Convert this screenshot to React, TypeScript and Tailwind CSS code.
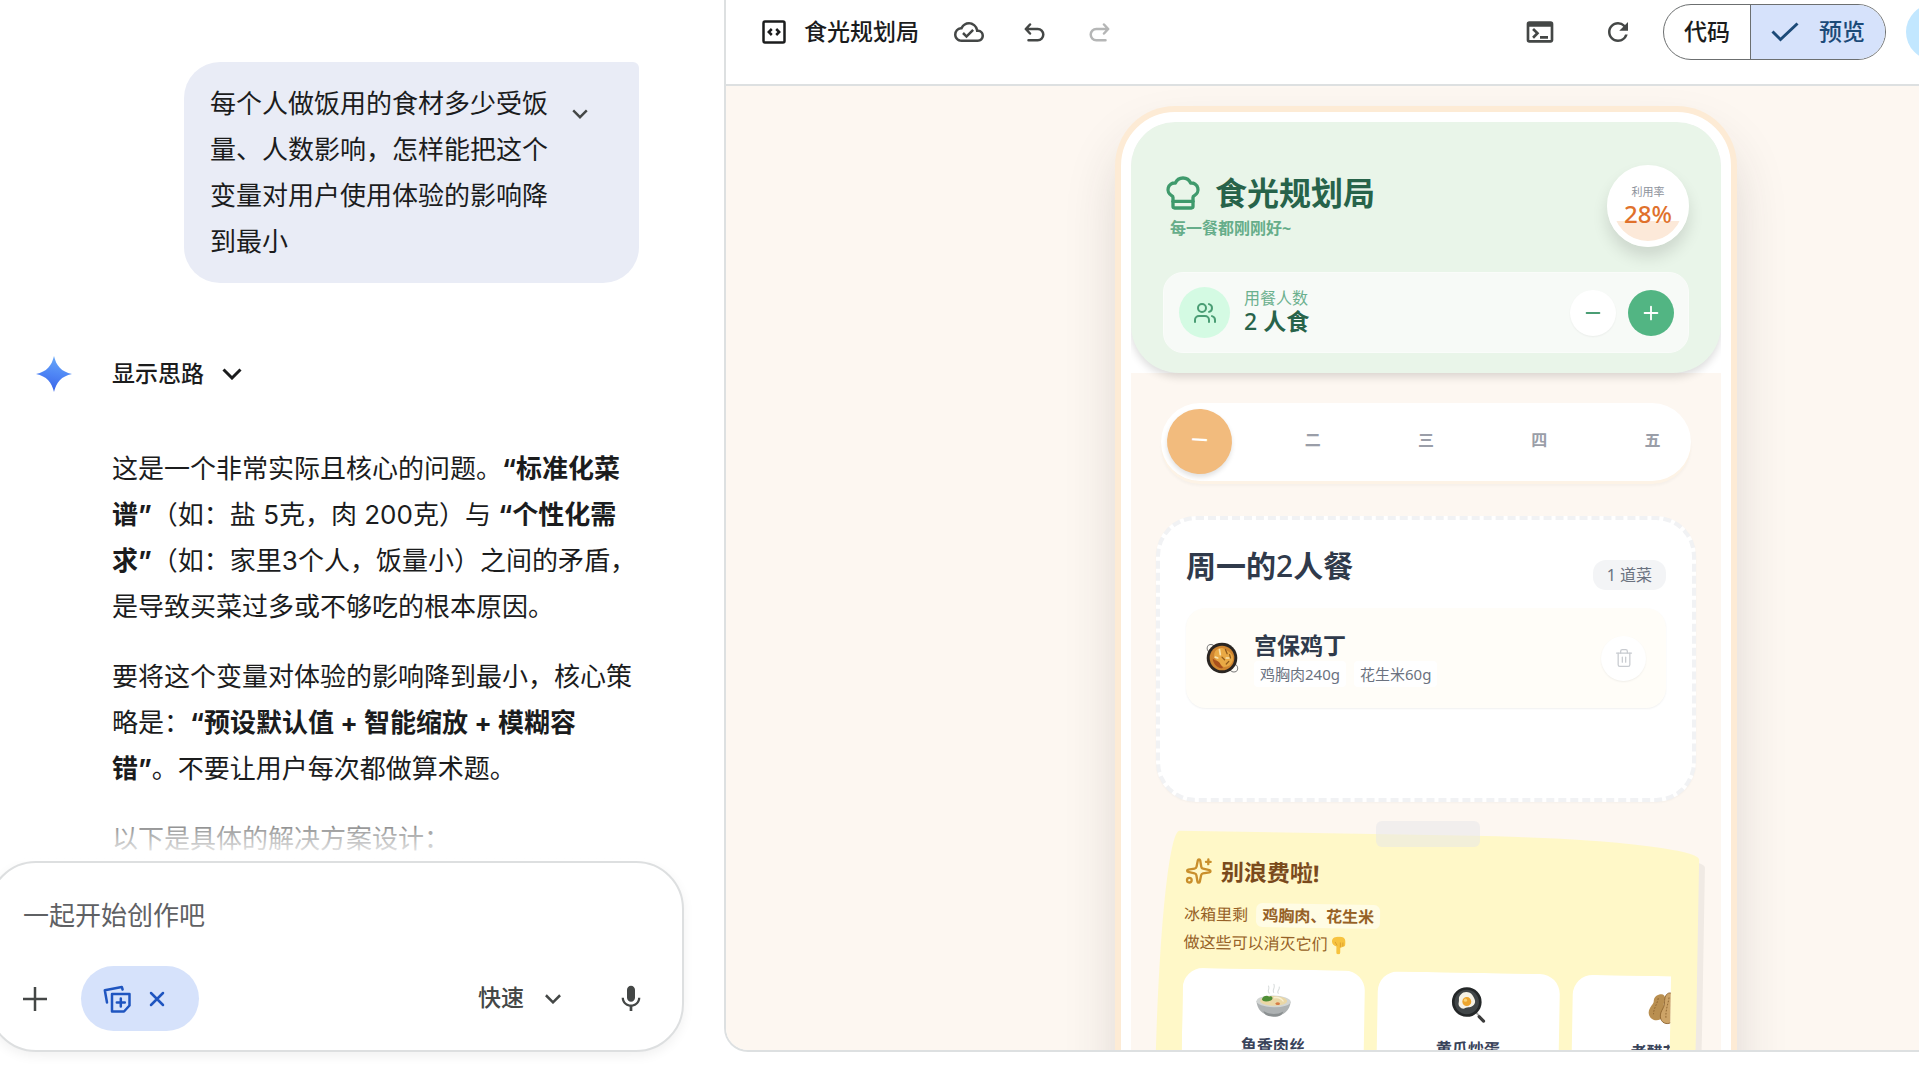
// Canvas workspace: chat column on the left, live app preview on the right.
import { useState } from 'react'
import { ChefHat, Minus, Plus, Sparkles, Trash2, Users } from 'lucide-react'
import { MdMic, MdOutlineCloudDone, MdOutlineTerminal, MdRefresh } from 'react-icons/md'

type DishArt = 'pan' | 'soup' | 'egg' | 'peanut'

const DAYS = ['一', '二', '三', '四', '五']

const INGREDIENTS = ['鸡胸肉240g', '花生米60g']

const SUGGESTIONS: { name: string; art: DishArt }[] = [
  { name: '鱼香肉丝', art: 'soup' },
  { name: '黄瓜炒蛋', art: 'egg' },
  { name: '老醋花生', art: 'peanut' },
]

function Chevron({ className }: { className?: string }) {
  return (
    <svg viewBox="0 0 20 12" fill="none" stroke="currentColor" strokeWidth="3" className={className} aria-hidden="true">
      <path d="M1.5 1.5 10 10l8.500-8.500" />
    </svg>
  )
}

function GeminiStar() {
  return (
    <svg viewBox="0 0 36 36" className="size-9" aria-hidden="true">
      <defs>
        <linearGradient id="star" x1="0.6" y1="0" x2="0.4" y2="1">
          <stop offset="0" stopColor="#6aaaf8" />
          <stop offset="0.5" stopColor="#4f86f5" />
          <stop offset="1" stopColor="#3a63e8" />
        </linearGradient>
      </defs>
      <path fill="url(#star)" d="M18 0c1.300 5.200 2.800 8.600 5.800 11.800C26.800 15 30.500 16.700 36 18c-5.500 1.300-9.200 3-12.200 6.200C20.800 27.400 19.300 30.800 18 36c-1.300-5.200-2.800-8.600-5.800-11.800C9.200 21 5.500 19.300 0 18c5.500-1.300 9.200-3 12.200-6.200C15.200 8.600 16.700 5.200 18 0Z" />
    </svg>
  )
}

function CodeFileIcon() {
  return (
    <svg viewBox="0 0 24 24" fill="none" stroke="currentColor" strokeWidth="2.500" className="size-6" aria-hidden="true">
      <rect x="1.500" y="1.500" width="21" height="21" rx="1.500" />
      <path d="M9.800 9 6.800 12l3 3M14.200 9l3 3-3 3" />
    </svg>
  )
}

function UndoIcon({ className }: { className?: string }) {
  return (
    <svg viewBox="0 0 21 19" fill="none" stroke="currentColor" strokeWidth="2.500" strokeLinecap="round" strokeLinejoin="round" className={className} aria-hidden="true">
      <path d="M6 1.500 1.800 6 6 10.500M2.200 6h11.500a5.600 5.600 0 0 1 0 11.200H4.500" />
    </svg>
  )
}

function CanvasChipIcon() {
  return (
    <svg viewBox="0 0 28 28" fill="none" stroke="currentColor" strokeWidth="2.500" strokeLinecap="round" strokeLinejoin="round" className="size-7" aria-hidden="true">
      <path d="M4 17.500 1.800 5.200 18.800 2l.8 2.500" />
      <path d="M9 9h17.500v11.500l-5.500 6H9z" />
      <path d="M17.800 13.500v8M13.800 17.500h8" />
    </svg>
  )
}

function PointDown() {
  return (
    <svg viewBox="0 0 14 18" className="ml-1 inline-block h-[18px] w-[14px] align-[-4px]" role="img" aria-label="👇">
      <path fill="#f7c33f" d="M2.500 1.200C5 0 10 0 12 1.200c1.800 1.200 2.200 4 1.800 6.800-.3 1.600-1.200 2.400-2.500 2.300-.6.700-1.500 1-2.500.7V16a1.900 1.900 0 0 1-3.900 0v-6C2.500 9.500.6 8 .4 5.500.3 3.500 1 2 2.500 1.200Z" />
      <path fill="none" stroke="#d9992b" strokeWidth=".8" d="M8.800 6v5M11.300 6v4M3.500 5.500l2 3.500" />
    </svg>
  )
}

function DishIcon({ art, className }: { art: DishArt; className?: string }) {
  return (
    <svg viewBox="0 0 40 40" className={className} aria-hidden="true">
      {art === 'pan' && (
        <>
          <circle cx="7" cy="8.500" r="4.500" fill="none" stroke="#7b7b7b" strokeWidth="1.200" />
          <circle cx="34" cy="32" r="4.500" fill="none" stroke="#7b7b7b" strokeWidth="1.200" />
          <circle cx="20" cy="20" r="18" fill="#2a2522" />
          <circle cx="20" cy="20" r="14.500" fill="#cf8530" />
          <path fill="#e9a945" d="M12 12c4-5 9-4 12-2s9 5 9 10-3 9-7 10-5 1-8-3-10-7-6-15Z" />
          <path fill="#a9501c" d="M9 21c3 2 8 3 9 6s5 4 2 5-10-3-11-11Z" />
          <path fill="none" stroke="#8f5a1c" strokeWidth="1.500" strokeLinecap="round" d="m24 10 2 5M28 24l-3 3M20 19l3 3M29 16l1 4" />
          <path fill="none" stroke="#f8e3ae" strokeWidth="2" strokeLinecap="round" d="m17 10 1 6M12 19l3 1M25 20h3" />
        </>
      )}
      {art === 'soup' && (
        <>
          <path fill="none" stroke="#d9dddd" strokeWidth="1.200" strokeLinecap="round" d="M15 11c-3-3 1-4-1-8M20 10c-2-3 2-5 0-9M25 11c-2-3 2-4 1-7" />
          <path fill="#aeb2b3" d="M1 20c1 10 7 16 19 16s18-6 19-16Z" />
          <path fill="#8b9091" d="M9 31c6 4 16 4 22 0-1 4-4 6-11 6S10 35 9 31Z" />
          <ellipse cx="20" cy="20" rx="19" ry="6.500" fill="#d2d5d3" />
          <ellipse cx="20" cy="19.500" rx="15" ry="5.500" fill="#ead7a6" />
          <path fill="#4e8e36" d="M7 18c1-4 6-5 8-3 4-2 5 3 2 4-4 2-9 2-10-1Z" />
          <path fill="#d77c46" d="M22 22c2-2 6-1 5 1s-5 1-5-1Z" />
          <path fill="none" stroke="#f8efd0" strokeWidth="1.500" d="M20 16c5-1 9 1 11 4" />
        </>
      )}
      {art === 'egg' && (
        <>
          <path stroke="#aaa" strokeWidth="2" d="m28 28 4 4" />
          <path stroke="#3d3d3d" strokeWidth="3.500" strokeLinecap="round" d="m32 33 5 5" />
          <circle cx="18" cy="17" r="16.500" fill="#242728" />
          <circle cx="18" cy="17" r="13.500" fill="#414648" />
          <path fill="#f6f2e6" d="M11 9c4-5 11-3 13 0s5 7 2 11-7 2-10 4-8-2-7-6-1-6 2-9Z" />
          <circle cx="18" cy="16.500" r="5" fill="#eda52d" />
          <circle cx="16.500" cy="15" r="1.800" fill="#f9d374" />
        </>
      )}
      {art === 'peanut' && (
        <>
          <path fill="#b98f50" d="M15 5c5-2 8 2 6 7s1 8 0 14-7 9-12 7-7-8-4-13 4-5 4-8 2-6 6-7Z" />
          <path fill="#cda468" stroke="#8d6530" strokeWidth="1" d="M27 3c6 0 8 6 5 10s2 7 2 13-5 12-11 11-8-8-5-14 3-6 3-10 1-10 6-10Z" />
          <path fill="none" stroke="#8d6530" strokeWidth="1" strokeDasharray="2 1.500" d="M14 9c-1 7-5 11-5 18M26 8c-1 8-4 14-3 24M29 8c0 8 1 15 0 23" />
        </>
      )}
    </svg>
  )
}

function ChatColumn() {
  return (
    <section className="flex min-h-0 flex-col font-['Inter','Noto_Sans_CJK_SC',sans-serif] text-[#1b1c1d]">
      <div className="relative min-h-0 flex-1 overflow-hidden pr-[85px] [text-spacing-trim:space-all]">
        <div className="mt-[62px] ml-auto flex w-[455px] items-start gap-[22px] rounded-[36px] rounded-tr-[6px] bg-[#e9ecf6] pt-[19px] pb-[18px] pl-[26px]">
          <p className="w-[340px] text-[26px] leading-[46px]">每个人做饭用的食材多少受饭量、人数影响，怎样能把这个变量对用户使用体验的影响降到最小</p>
          <button type="button" aria-label="展开" className="mt-7 text-[#444746]">
            <Chevron className="h-[10px] w-4" />
          </button>
        </div>

        <div className="mt-[71px] flex h-10 items-center gap-10 pl-9">
          <GeminiStar />
          <button type="button" className="flex items-center gap-[18px] text-[23px] font-medium">
            显示思路
            <Chevron className="h-3 w-5" />
          </button>
        </div>

        <div className="mt-[52px] flex flex-col gap-6 pl-28 text-[26px] leading-[46px]">
          <p>
            这是一个非常实际且核心的问题。<b>“标准化菜谱”</b>（如：盐 5克，肉 200克）与 <b>“个性化需求”</b>（如：家里3个人，饭量小）之间的矛盾，是导致买菜过多或不够吃的根本原因。
          </p>
          <p>
            要将这个变量对体验的影响降到最小，核心策略是：<b>“预设默认值 + 智能缩放 + 模糊容错”</b>。不要让用户每次都做算术题。
          </p>
          <p>以下是具体的解决方案设计：</p>
        </div>
        <div className="pointer-events-none absolute inset-x-0 bottom-0 h-[60px] bg-linear-to-t from-white via-white/60 to-transparent" />
      </div>

      <form className="mr-10 mb-7 -ml-3 flex h-[191px] flex-col rounded-[48px] border-2 border-[#dddfe0] bg-white pr-[35px] pl-[33px] shadow-[0_4px_12px_rgba(0,0,0,0.06)]" onSubmit={(e) => e.preventDefault()}>
        <input
          aria-label="一起开始创作吧"
          placeholder="一起开始创作吧"
          className="mt-[29px] h-[46px] w-full bg-transparent text-[26px] outline-none placeholder:text-[#5f6164] placeholder:opacity-100"
        />
        <div className="mt-7 flex items-center text-[#444746]">
          <button type="button" aria-label="添加">
            <svg viewBox="0 0 24 24" fill="none" stroke="currentColor" strokeWidth="2.500" className="size-6" aria-hidden="true">
              <path d="M12 0v24M0 12h24" />
            </svg>
          </button>
          <button type="button" aria-label="关闭 Canvas" className="ml-[34px] flex h-[65px] items-center gap-[18px] rounded-full bg-[#d6e2fb] px-[22px] text-[#1f55c0]">
            <CanvasChipIcon />
            <svg viewBox="0 0 16 16" fill="none" stroke="currentColor" strokeWidth="2.500" strokeLinecap="round" className="mr-3 size-4" aria-hidden="true">
              <path d="m2 2 12 12M14 2 2 14" />
            </svg>
          </button>
          <button type="button" className="ml-auto flex items-center gap-5 text-[23px] font-medium">
            快速
            <Chevron className="h-[10px] w-[18px]" />
          </button>
          <button type="button" aria-label="麦克风" className="ml-[53px]">
            <MdMic className="size-8" />
          </button>
        </div>
      </form>
    </section>
  )
}

function Toolbar() {
  return (
    <header className="flex h-[86px] items-start justify-between overflow-hidden border-b-2 border-[#dde0e1] bg-white pt-1 font-['Inter','Noto_Sans_CJK_SC',sans-serif] text-[#444746]">
      <div className="flex h-14 items-center pl-9">
        <span className="text-[#1b1c1d]"><CodeFileIcon /></span>
        <h1 className="ml-[18px] text-[23px] font-medium text-[#1b1c1d]">食光规划局</h1>
        <MdOutlineCloudDone className="ml-[35px] size-[30px]" />
        <button type="button" aria-label="撤消" className="ml-10"><UndoIcon className="h-[19px] w-[21px]" /></button>
        <button type="button" aria-label="重做" className="ml-11 text-[#b5b6b6]" disabled><UndoIcon className="h-[19px] w-[21px] -scale-x-100" /></button>
      </div>
      <div className="-mr-[43px] flex h-14 items-center">
        <button type="button" aria-label="控制台"><MdOutlineTerminal className="size-8" /></button>
        <button type="button" aria-label="刷新" className="ml-[47px]"><MdRefresh className="size-[30px]" /></button>
        <div className="ml-[30px] flex h-14 overflow-hidden rounded-full border border-[#6c6f70] text-[23px] font-medium">
          <button type="button" className="border-r border-[#6c6f70] px-5 text-[#1b1c1d]">代码</button>
          <button type="button" aria-pressed="true" className="flex items-center gap-5 bg-[#d6e2fb] px-5 text-[#1c4a78]">
            <svg viewBox="0 0 28 20" fill="none" stroke="currentColor" strokeWidth="3" className="h-5 w-7" aria-hidden="true">
              <path d="m1.500 9.500 8 8L26.500 1.500" />
            </svg>
            预览
          </button>
        </div>
        <button type="button" aria-label="分享" className="ml-5 size-14 rounded-full bg-[#c2e7ff]" />
      </div>
    </header>
  )
}

function PhoneHeader({ people, onChange }: { people: number; onChange: (n: number) => void }) {
  return (
    <div className="relative z-10 rounded-[48px] rounded-t-[44px] bg-[#e9f5e9] px-8 pt-[43px] pb-5 shadow-[0_4px_8px_rgba(0,0,0,0.14)]">
      <div className="flex items-start justify-between">
        <div className="pt-2">
          <h2 className="flex items-center gap-3 text-[32px] leading-10 font-bold text-[#27634a]">
            <ChefHat className="size-10 text-[#3f9a6c]" />
            食光规划局
          </h2>
          <p className="pl-[7px] text-[16px] leading-[30px] font-bold text-[#66ad8a]">每一餐都刚刚好~</p>
        </div>
        <div className="relative flex size-[82px] flex-col items-center justify-center overflow-hidden rounded-full border-[6px] border-white bg-[linear-gradient(to_top,#fce9d9_28%,#ffffff_28%)] shadow-[0_10px_16px_rgba(0,0,0,0.12)]">
          <span className="text-[11px] leading-4 text-[#8d929c]">利用率</span>
          <span className="text-[24px] leading-7 font-medium text-[#e0712c]">28%</span>
        </div>
      </div>

      <div className="mt-[25px] flex items-center rounded-[20px] border border-[#fafcfa] bg-[#f7faf7] py-[14px] pr-[14px] pl-[15px]">
        <span className="flex size-[51px] items-center justify-center rounded-full bg-[#d4fae3] text-[#4a9d74]">
          <Users className="size-6" />
        </span>
        <div className="ml-[14px] flex-1 pb-1">
          <p className="text-[16px] leading-5 text-[#6bb08e]">用餐人数</p>
          <p className="text-[23px] leading-[26px] font-bold text-[#27634a]"><span className="font-medium">{people}</span> 人食</p>
        </div>
        <button type="button" aria-label="减少人数" className="flex size-[46px] items-center justify-center rounded-full bg-white text-[#4a9d74] shadow-[0_1px_2px_rgba(0,0,0,0.05)]" onClick={() => onChange(Math.max(1, people - 1))}>
          <Minus className="size-[22px]" />
        </button>
        <button type="button" aria-label="增加人数" className="ml-3 flex size-[46px] items-center justify-center rounded-full bg-[#52b583] text-white" onClick={() => onChange(people + 1)}>
          <Plus className="size-[22px]" />
        </button>
      </div>
    </div>
  )
}

function MealCard({ day, people }: { day: string; people: number }) {
  return (
    <section className="mt-[35px] min-h-[286px] rounded-[40px] border-4 border-dashed border-[#f1f2f4] bg-white px-[26px] pt-[26px] shadow-[0_1px_2px_rgba(0,0,0,0.03)]">
      <div className="flex h-11 items-end justify-between">
        <h3 className="self-start text-[30px] leading-10 font-bold text-[#303a4b]">周{day}的<span className="font-medium">{people}</span>人餐</h3>
        <span className="rounded-[13px] bg-[#f3f4f6] px-[14px] text-[16px] leading-[30px] text-[#6b7280]">1 道菜</span>
      </div>
      <div className="mt-[18px] flex h-[100px] items-center rounded-[20px] bg-[#fffdf8] pr-5 pl-[19px] shadow-[0_1px_2px_rgba(0,0,0,0.06)]">
        <DishIcon art="pan" className="size-[34px]" />
        <div className="ml-[15px] flex-1">
          <h4 className="text-[23px] leading-8 font-bold text-[#303a4b]">宫保鸡丁</h4>
          <ul className="flex gap-2 text-[15px] leading-[26px] text-[#6b7280]">
            {INGREDIENTS.map((it) => <li key={it} className="rounded bg-white px-[6px]">{it}</li>)}
          </ul>
        </div>
        <button type="button" aria-label="删除" className="flex size-[45px] items-center justify-center rounded-full bg-white text-[#c8cbd0] shadow-[0_1px_2px_rgba(0,0,0,0.06)]">
          <Trash2 className="size-5" strokeWidth={1.5} />
        </button>
      </div>
    </section>
  )
}

function LeftoverNote() {
  return (
    <section className="relative mt-[33px]">
      <div className="min-h-[400px] rotate-1 rounded-[20px_225px_20px_255px/255px_20px_225px_20px] bg-[#fff8c8] px-[26px] pt-[25px] shadow-[6px_8px_0_rgba(0,0,0,0.05)]">
        <h3 className="flex items-center gap-2 text-[23px] leading-[30px] font-bold text-[#7a4a1c]">
          <Sparkles className="size-7 text-[#c98f2c]" />
          别浪费啦!
        </h3>
        <p className="mt-[14px] text-[16px] leading-7 text-[#966126]">
          冰箱里剩 <b className="ml-1 rounded-md bg-white/50 px-1.5 py-px">鸡胸肉、花生米</b>
          <br />
          做这些可以消灭它们<PointDown />
        </p>
        <div className="mt-3 flex gap-[13px] overflow-hidden">
          {SUGGESTIONS.map((s) => (
            <button key={s.name} type="button" className="flex h-[150px] w-[182px] shrink-0 flex-col items-center rounded-[20px] bg-white pt-[14px]">
              <DishIcon art={s.art} className="size-9" />
              <span className="mt-[14px] text-[16px] leading-6 font-bold text-[#39435a]">{s.name}</span>
            </button>
          ))}
        </div>
      </div>
      <div className="absolute -top-[14px] left-1/2 ml-[2px] h-[26px] w-[104px] -translate-x-1/2 rounded-md bg-[#e6e6ea]/50" />
    </section>
  )
}

function Phone() {
  const [people, setPeople] = useState(2)
  const [day, setDay] = useState('一')

  return (
    <div className="w-[610px] shrink-0 overflow-hidden rounded-[54px] border-[10px] border-white bg-white font-['Noto_Sans','Noto_Sans_CJK_SC',sans-serif] shadow-[0_0_0_6px_#fdebd5,0_30px_56px_rgba(50,45,50,0.18)]">
      <PhoneHeader people={people} onChange={setPeople} />
      <div className="bg-[#fdf7f1] px-[25px] pt-[30px] pb-20">
        <div className="mx-[5px] flex justify-between rounded-full bg-white px-1.5 pt-1.5 pb-[7px] shadow-[0_3px_0_#fdf3e6,0_5px_3px_rgba(0,0,0,0.03)]">
          {DAYS.map((d) => (
            <button
              key={d}
              type="button"
              onClick={() => setDay(d)}
              className={`size-[65px] rounded-full pb-[3px] text-[16px] font-bold ${
                d === day ? 'rotate-3 bg-[#f2bb7d] text-white shadow-[0_3px_5px_rgba(0,0,0,0.12)]' : 'text-[#9a9ea8]'}`}
            >
              {d}
            </button>
          ))}
        </div>
        <MealCard day={day} people={people} />
        <LeftoverNote />
      </div>
    </div>
  )
}

export default function App() {
  return (
    <main className="grid h-screen grid-cols-[724fr_1195fr] grid-rows-[minmax(0,1fr)] overflow-hidden bg-white">
      <ChatColumn />
      <section className="mb-7 flex min-w-0 flex-col overflow-hidden rounded-bl-[24px] border-b-2 border-l-2 border-[#dde0e1]">
        <Toolbar />
        <div className="min-h-0 flex-1 overflow-hidden bg-[#fdf7f1]">
          {/* the preview is wider than its pane, the phone is centred in the full stage */}
          <div className="flex w-[1400px] justify-center pt-[26px]">
            <Phone />
          </div>
        </div>
      </section>
    </main>
  )
}
